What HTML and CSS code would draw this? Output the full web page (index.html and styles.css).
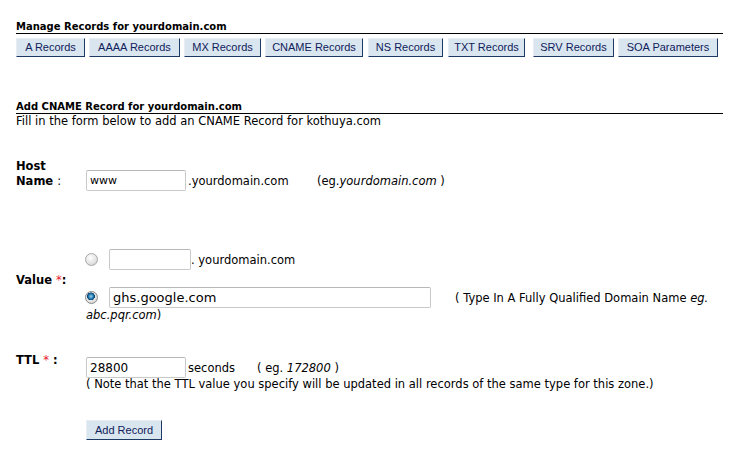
FILE: index.html
```html
<!DOCTYPE html>
<html>
<head>
<meta charset="utf-8">
<link rel="stylesheet" href="styles.css">
</head>
<body>
<div class="page">
  <h2 class="sec-title">Manage Records for yourdomain.com</h2>
  <div class="tabs">
    <button class="btn tab-a">A Records</button>
    <button class="btn tab-aaaa">AAAA Records</button>
    <button class="btn tab-mx">MX Records</button>
    <button class="btn tab-cname">CNAME Records</button>
    <button class="btn tab-ns">NS Records</button>
    <button class="btn tab-txt">TXT Records</button>
    <button class="btn tab-srv">SRV Records</button>
    <button class="btn tab-soa">SOA Parameters</button>
  </div>

  <h2 class="sec-title sec-two">Add CNAME Record for yourdomain.com</h2>
  <p class="intro">Fill in the form below to add an CNAME Record for kothuya.com</p>

  <div class="row row-host">
    <div class="label">Host<br>Name <span class="colon">:</span></div>
    <div class="field host-field">
      <input class="txt txt-host" type="text" value="www">
      <span class="suffix suffix-host">.yourdomain.com</span>
      <span class="hint">(eg.<i>yourdomain.com</i> )</span>
    </div>
  </div>

  <div class="row row-value">
    <div class="label label-value">Value <span class="req">*</span>:</div>
    <div class="field">
      <div class="opt">
        <span class="radio"></span>
        <input class="txt txt-sub" type="text" value="">
        <span class="suffix suffix-sub">. yourdomain.com</span>
      </div>
      <div class="opt opt-two">
        <span class="radio on"></span>
        <input class="txt txt-fqdn" type="text" value="ghs.google.com">
        <span class="hint-fqdn">( Type In A Fully Qualified Domain Name <i>eg.</i></span>
      </div>
      <div class="wrapline"><i>abc.pqr.com</i>)</div>
    </div>
  </div>

  <div class="row row-ttl">
    <div class="label label-ttl">TTL <span class="req">*</span> :</div>
    <div class="field ttl-field">
      <div class="opt">
        <input class="txt txt-ttl" type="text" value="28800">
        <span class="suffix suffix-ttl">seconds</span>
        <span class="hint">( eg. <i>172800</i> )</span>
      </div>
      <div class="note">( Note that the TTL value you specify will be updated in all records of the same type for this zone.)</div>
      <button class="btn btn-add">Add Record</button>
    </div>
  </div>
</div>
</body>
</html>
```

FILE: styles.css
```css
html, body {
  margin: 0;
  padding: 0;
  background: #ffffff;
}

body {
  font-family: "DejaVu Sans", Verdana, sans-serif;
  font-size: 11.5px;
  color: #000000;
}

.page {
  width: 707px;
  padding: 20px 0 0 16px;
}

.sec-title {
  margin: 0;
  font-size: 10px;
  font-weight: bold;
  line-height: 13px;
  border-bottom: 1px solid #000000;
}

.sec-two {
  margin-top: 43px;
}

.tabs {
  display: flex;
  margin-top: 4px;
}

.btn {
  box-sizing: border-box;
  height: 19px;
  padding: 0;
  margin: 0;
  font-family: "Liberation Sans", Tahoma, sans-serif;
  font-size: 11px;
  line-height: 15px;
  text-align: center;
  color: #10205a;
  background: #d9e6f0;
  border: 1px solid;
  border-color: #e8eef4 #1c3a64 #1c3a64 #e8eef4;
  border-radius: 0;
  white-space: nowrap;
  flex: none;
}

.tab-a { width: 69px; }
.tab-aaaa { width: 91px; margin-left: 4px; }
.tab-mx { width: 77px; margin-left: 4px; }
.tab-cname { width: 98px; margin-left: 4px; }
.tab-ns { width: 75px; margin-left: 5px; }
.tab-txt { width: 77px; margin-left: 5px; }
.tab-srv { width: 81px; margin-left: 8px; }
.tab-soa { width: 100px; margin-left: 4px; }

.intro {
  margin: 0;
  line-height: 14px;
}

.row {
  display: flex;
  align-items: flex-start;
}

.label {
  width: 70px;
  flex: none;
  font-weight: bold;
  line-height: 15px;
}

.label .colon {
  font-weight: normal;
}

.req {
  color: #e8202a;
  font-weight: normal;
}

.field {
  flex: 1;
}

.row-host {
  margin-top: 31px;
}

.host-field {
  display: flex;
  align-items: center;
  margin-top: 11px;
}

.txt {
  box-sizing: border-box;
  height: 21px;
  margin: 0;
  padding: 0 3px;
  border: 1px solid #c9c9c9;
  border-top-color: #b8b8b8;
  border-radius: 2px;
  font-family: "DejaVu Sans", Verdana, sans-serif;
  font-size: 11px;
  color: #000000;
  background: #ffffff;
}

.txt-host {
  width: 100px;
}

.suffix {
  margin-left: 2px;
}

.suffix-sub {
  margin-left: 0;
}

.suffix-host {
  width: 129px;
}

.row-value {
  margin-top: 58px;
}

.label-value {
  margin-top: 24px;
  line-height: 14px;
}

.opt {
  display: flex;
  align-items: center;
}

.opt-two {
  margin-top: 17px;
}

.radio {
  box-sizing: border-box;
  width: 13px;
  height: 13px;
  margin: 0 11px 0 -1px;
  border-radius: 50%;
  border: 1px solid #a8a8a8;
  background: radial-gradient(circle at 40% 35%, #ffffff 0%, #e4e4e4 55%, #c8c8c8 100%);
  flex: none;
}

.radio.on {
  border-color: #8a8a8a;
  background:
    radial-gradient(circle at 45% 40%, #9ad2ef 0%, #1f78b0 28%, #0d3f68 42%, transparent 46%),
    radial-gradient(circle at 40% 35%, #ffffff 0%, #e4e4e4 55%, #c8c8c8 100%);
}

.txt-sub {
  width: 82px;
}

.txt-fqdn {
  width: 322px;
  font-size: 13px;
}

.hint-fqdn {
  margin-left: 24px;
}

.wrapline {
  line-height: 14px;
}

.row-ttl {
  margin-top: 29px;
}

.label-ttl {
  margin-top: 2px;
}

.ttl-field {
  margin-top: 6px;
}

.txt-ttl {
  width: 100px;
  font-size: 12px;
}

.suffix-ttl {
  width: 69px;
}

.note {
  line-height: 13px;
}

.btn-add {
  display: block;
  width: 76px;
  height: 20px;
  margin-top: 29px;
}
```
